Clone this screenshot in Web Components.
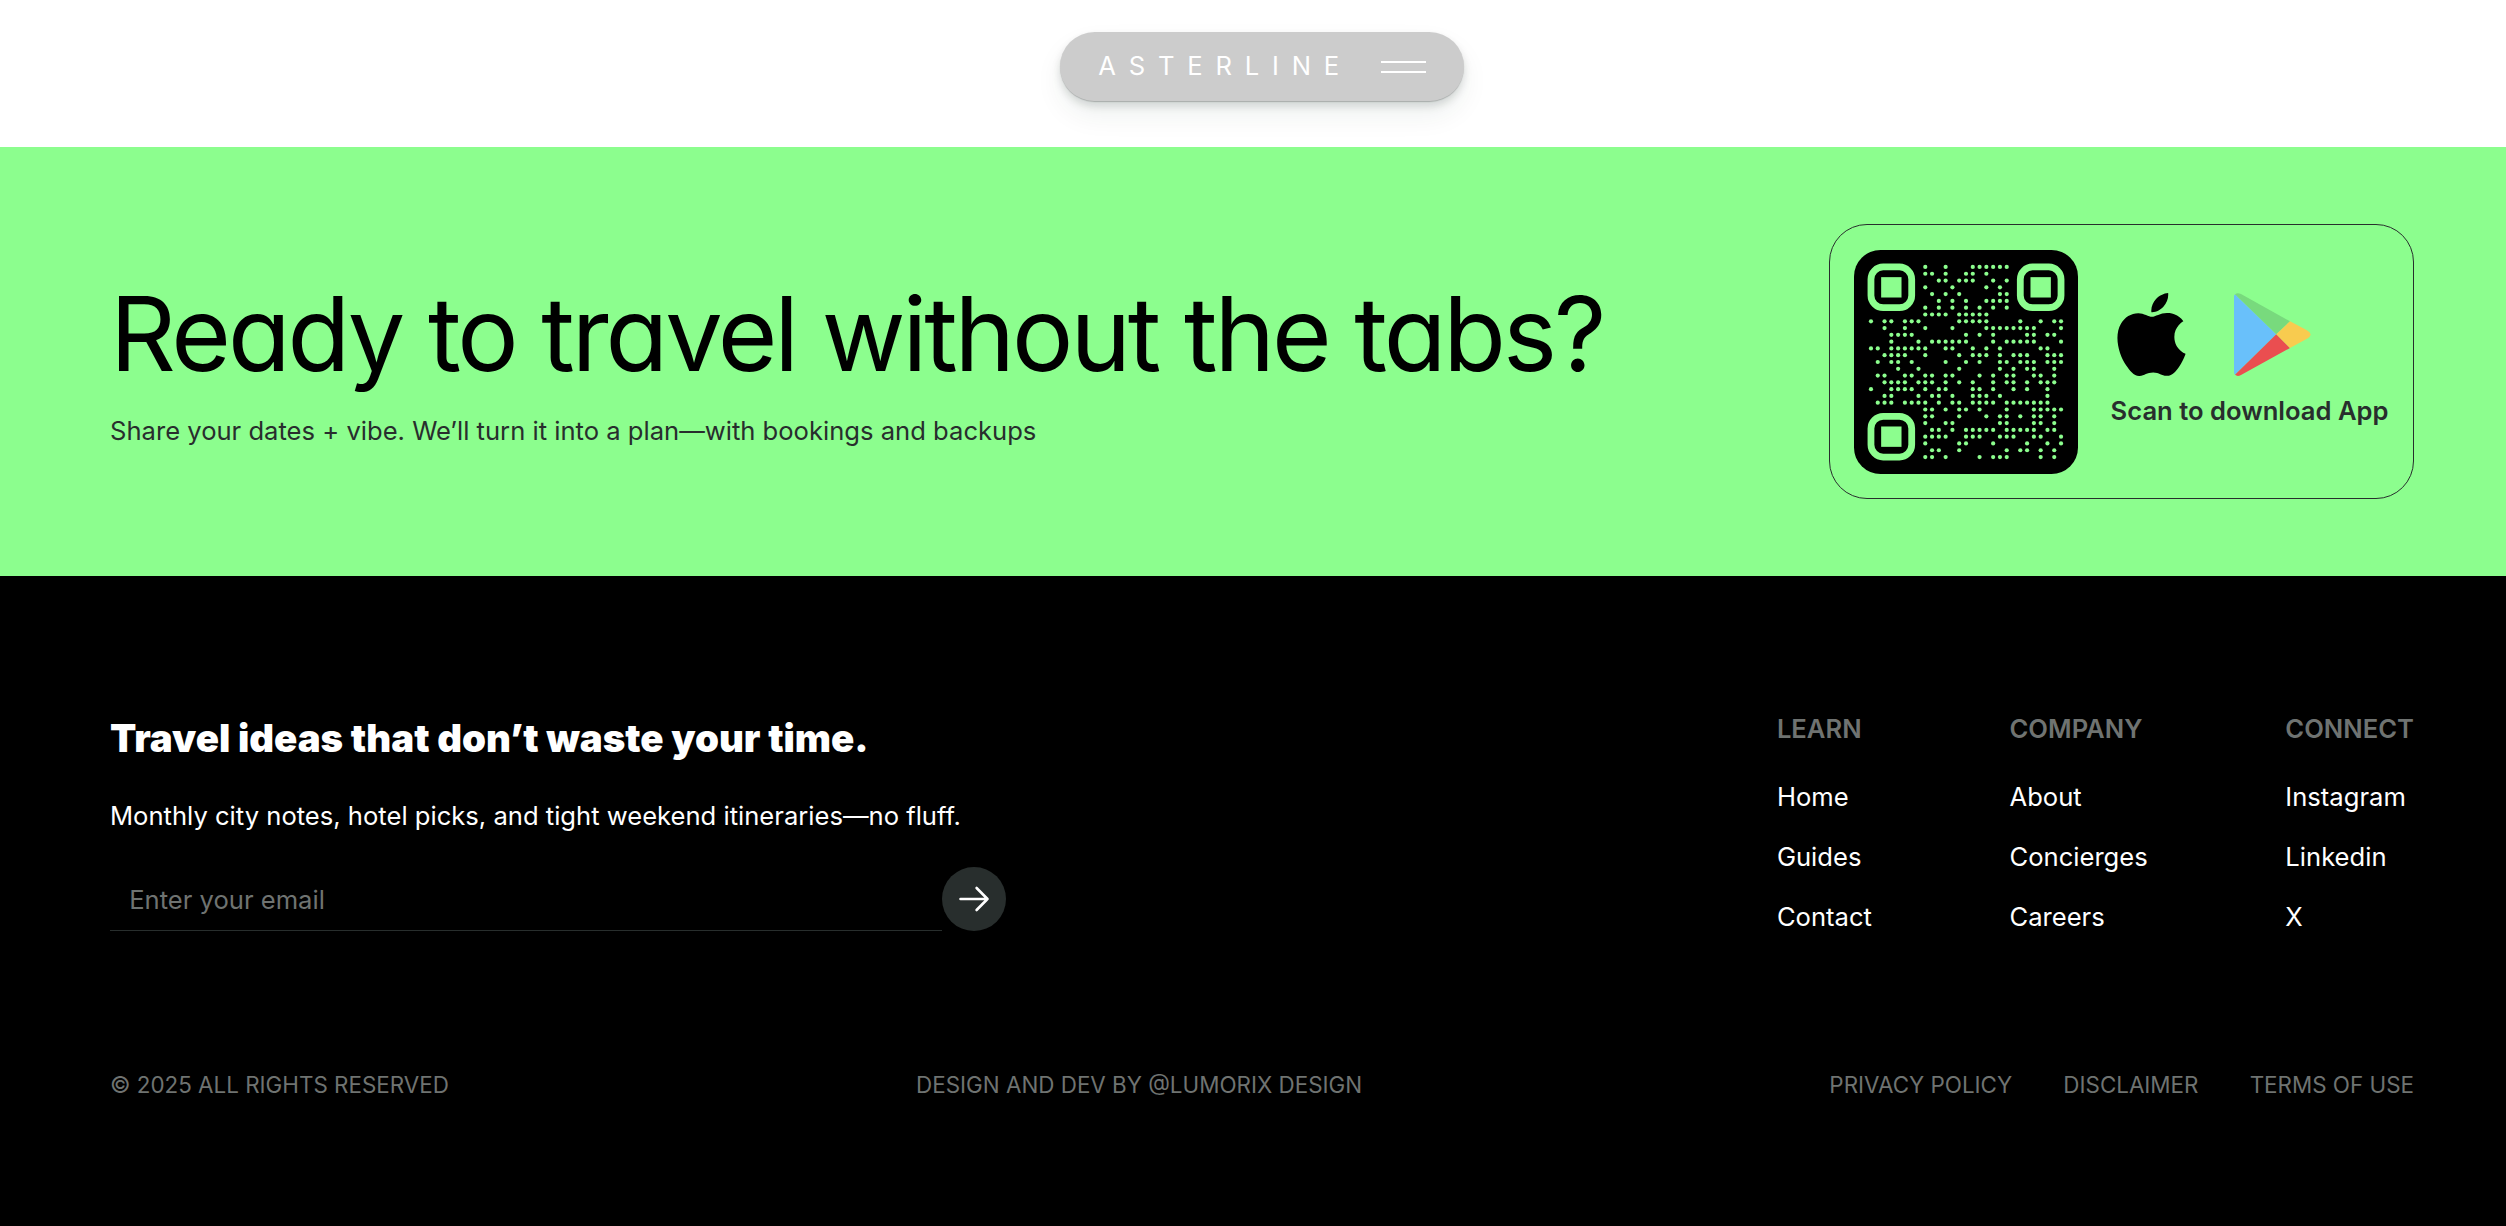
<!DOCTYPE html>
<html lang="en">
<head>
<meta charset="utf-8">
<title>Asterline</title>
<style>
  body {
    margin: 0;
    background: #000000;
    font-family: Inter, "Liberation Sans", sans-serif;
    font-size: 25.6px;
    line-height: 38.4px;
    --green: #8cfe8e;
    --ink: #282e2d;
    --muted: #6f7371;
    --line: #282e2d;
  }
</style>
</head>
<body>
<nav-pill>ASTERLINE</nav-pill>

<cta-band>
  <span slot="title">Ready to travel without the tabs?</span>
  <span slot="text">Share your dates + vibe. We’ll turn it into a plan—with bookings and backups</span>
  <app-download>Scan to download App</app-download>
</cta-band>

<site-footer>
  <email-signup slot="signup" placeholder="Enter your email">
    <span slot="title">Travel ideas that don’t waste your time.</span>
    <span slot="text">Monthly city notes, hotel picks, and tight weekend itineraries—no fluff.</span>
  </email-signup>
  <link-column slot="links" heading="LEARN">
    <a>Home</a><a>Guides</a><a>Contact</a>
  </link-column>
  <link-column slot="links" heading="COMPANY">
    <a>About</a><a>Concierges</a><a>Careers</a>
  </link-column>
  <link-column slot="links" heading="CONNECT">
    <a>Instagram</a><a>Linkedin</a><a>X</a>
  </link-column>
  <span slot="legal">© 2025 ALL RIGHTS RESERVED</span>
  <span slot="legal">DESIGN AND DEV BY @LUMORIX DESIGN</span>
  <legal-links slot="legal">
    <a>PRIVACY POLICY</a><a>DISCLAIMER</a><a>TERMS OF USE</a>
  </legal-links>
</site-footer>

<script>
const html = String.raw;

function attach(el, markup) {
  const template = document.createElement("template");
  template.innerHTML = markup;
  const root = el.attachShadow({ mode: "open" });
  root.appendChild(template.content.cloneNode(true));
  return root;
}

class NavPill extends HTMLElement {
  constructor() {
    super();
    attach(this, html`
      <style>
        :host {
          display: flex;
          justify-content: center;
          box-sizing: border-box;
          height: 147px;
          padding: 32px 0 0 18px;
          background: #ffffff;
        }
        .pill {
          display: flex;
          align-items: center;
          gap: 28.8px;
          box-sizing: border-box;
          height: 69px;
          padding: 0 38.4px;
          border-radius: 36px;
          background: rgba(0, 0, 0, 0.2);
          color: #ffffff;
          box-shadow:
            0 1px 1px rgba(0, 0, 0, 0.2),
            0 5px 9px rgba(10, 20, 17, 0.14),
            0 14px 28px rgba(20, 50, 40, 0.07);
        }
        .name {
          letter-spacing: 12.8px;
          padding-bottom: 1px;
        }
        .menu {
          display: flex;
          flex-direction: column;
          gap: 8px;
          width: 44.8px;
          padding-top: 1px;
        }
        .menu i {
          height: 2px;
          background: #ffffff;
        }
      </style>
      <div class="pill">
        <span class="name"><slot></slot></span>
        <div class="menu"><i></i><i></i></div>
      </div>
    `);
  }
}

class CtaBand extends HTMLElement {
  constructor() {
    super();
    attach(this, html`
      <style>
        :host {
          display: flex;
          align-items: center;
          justify-content: space-between;
          box-sizing: border-box;
          height: 429px;
          padding: 0 92px 0 110px;
          background: var(--green);
        }
        h2 {
          margin: 0 0 16px;
          font-size: 102.4px;
          font-weight: 400;
          line-height: 1.2;
          letter-spacing: -0.03em;
          font-feature-settings: "cv11";
          color: #000000;
        }
        p {
          margin: 0;
          color: var(--ink);
        }
      </style>
      <div>
        <h2><slot name="title"></slot></h2>
        <p><slot name="text"></slot></p>
      </div>
      <slot></slot>
    `);
  }
}

// lit modules of the code, one list of columns per row
const MODULES = [
  [8, 11, 15, 16, 17, 18, 19, 20],
  [8, 9, 11, 14, 15, 17],
  [10, 11, 13, 14, 15, 18, 20],
  [8, 12, 17, 19],
  [9, 11, 13, 19, 20],
  [10, 12, 14, 17, 18, 19, 20],
  [8, 10, 12, 14, 16, 18, 20],
  [8, 9, 10, 11, 13, 14, 15, 16, 17],
  [0, 2, 3, 5, 6, 7, 13, 14, 15, 16, 17, 22, 25, 27, 28],
  [2, 5, 8, 12, 17, 18, 19, 20, 21, 22, 23, 24, 28],
  [3, 4, 5, 6, 14, 16, 18, 23, 24, 26, 27],
  [3, 7, 9, 10, 11, 12, 13, 14, 18, 20, 21, 22, 23, 24, 28],
  [0, 1, 3, 4, 5, 6, 7, 8, 11, 12, 15, 17, 19, 25, 26],
  [2, 3, 4, 5, 8, 13, 15, 16, 17, 19, 21, 22, 23, 26, 27, 28],
  [1, 3, 4, 6, 11, 14, 16, 19, 20, 22, 23, 24, 26, 27, 28],
  [4, 7, 13, 19, 21, 23, 24, 27],
  [1, 2, 5, 6, 8, 9, 11, 12, 16, 18, 20, 21, 24, 25, 27],
  [2, 3, 4, 5, 7, 8, 9, 11, 13, 15, 18, 20, 21, 23, 25, 26, 27],
  [0, 3, 4, 5, 6, 8, 10, 11, 15, 16, 18, 21, 23, 26],
  [2, 3, 7, 9, 10, 12, 15, 16, 17, 19, 26],
  [1, 2, 3, 5, 6, 7, 8, 10, 12, 13, 15, 16, 17, 18, 20, 21, 22, 23, 24, 25, 26],
  [8, 9, 11, 13, 14, 16, 20, 24, 25, 26, 27, 28],
  [8, 9, 13, 17, 19, 20, 22, 24, 25, 27],
  [8, 11, 12, 19, 20, 24, 25, 27],
  [9, 10, 12, 14, 15, 16, 17, 18, 20, 21, 22, 23, 24, 26, 27],
  [8, 9, 10, 11, 14, 15, 16, 19, 20, 21, 24, 25, 28],
  [8, 13, 14, 18, 23, 26, 28],
  [9, 10, 13, 20, 22, 23, 25, 27],
  [8, 9, 11, 16, 18, 19, 20, 25, 27],
];

class QrCode extends HTMLElement {
  constructor() {
    super();
    const dots = MODULES.map((cols, y) =>
      cols.map((x) => `<circle cx="${x + 2.5}" cy="${y + 2.5}" r="0.31" />`).join("")
    ).join("");
    const finders = [[2, 2], [24, 2], [2, 24]].map(([x, y]) => `
      <rect x="${x + 0.5}" y="${y + 0.5}" width="6" height="6" rx="1.8"
        fill="none" stroke="var(--green)" />
      <rect x="${x + 2}" y="${y + 2}" width="3" height="3" />
    `).join("");
    attach(this, html`
      <style>
        :host {
          display: block;
          flex: none;
          width: 224px;
          height: 224px;
        }
        svg {
          display: block;
        }
      </style>
      <svg width="224" height="224" viewBox="0 0 33 33" fill="var(--green)">
        <rect width="33" height="33" rx="3.9" fill="#000000" />
        ${finders}${dots}
      </svg>
    `);
  }
}

class AppDownload extends HTMLElement {
  constructor() {
    super();
    attach(this, html`
      <style>
        :host {
          display: flex;
          align-items: center;
          gap: 32.6px;
          box-sizing: border-box;
          width: 585px;
          height: 275px;
          padding: 0 0 0 24px;
          border: 1px solid var(--ink);
          border-radius: 38px;
          color: var(--ink);
          font-weight: 600;
          white-space: nowrap;
        }
        .stores {
          display: flex;
          gap: 48px;
          margin-bottom: 16px;
          padding-left: 6px;
        }
        svg {
          display: block;
        }
      </style>
      <qr-code></qr-code>
      <div>
        <div class="stores">
          <svg width="69" height="83" viewBox="2.1 0 19.8 24" preserveAspectRatio="none">
            <path d="M12.152 6.896c-.948 0-2.415-1.078-3.96-1.04-2.04.027-3.91 1.183-4.961 3.014-2.117 3.675-.546 9.103 1.519 12.09 1.013 1.454 2.208 3.09 3.792 3.039 1.52-.065 2.09-.987 3.935-.987 1.831 0 2.35.987 3.96.948 1.637-.026 2.676-1.48 3.676-2.948 1.156-1.688 1.636-3.325 1.662-3.415-.039-.013-3.182-1.221-3.22-4.857-.026-3.04 2.48-4.494 2.597-4.559-1.429-2.09-3.623-2.324-4.39-2.376-2-.156-3.675 1.09-4.61 1.09zM15.53 3.83c.843-1.012 1.4-2.427 1.245-3.83-1.207.052-2.662.805-3.532 1.818-.78.896-1.454 2.338-1.273 3.714 1.338.104 2.715-.688 3.559-1.701" />
          </svg>
          <svg width="77" height="83" viewBox="0 0 77 83">
            <path d="M1 1.2 L42.3 41.2 L1 81.8 Q0 81 0 79 V4 Q0 2 1 1.2Z" fill="#69c0fa" />
            <path d="M1 1.2 Q3.5 -0.8 7 1 L56 28.3 L42.3 41.2Z" fill="#78da7d" />
            <path d="M42.3 41.2 L56 55 L7 82 Q3.5 84 1 81.8Z" fill="#ea4e50" />
            <path d="M56 28.3 L72.5 37 Q80.5 41.5 72.5 46 L56 55 L42.3 41.2Z" fill="#f8cb4f" />
          </svg>
        </div>
        <slot></slot>
      </div>
    `);
  }
}

class EmailSignup extends HTMLElement {
  constructor() {
    super();
    const root = attach(this, html`
      <style>
        :host {
          display: block;
          width: 896px;
        }
        h3 {
          margin: 0 0 29.2px;
          font-size: 38.4px;
          font-weight: 900;
          line-height: 57.6px;
          color: #ffffff;
        }
        p {
          margin: 0 0 31px;
          color: #ffffff;
        }
        form {
          display: flex;
        }
        .field {
          display: flex;
          align-items: center;
          flex: 1;
          box-sizing: border-box;
          height: 64px;
          padding: 4px 19.2px 0;
          border-bottom: 1px solid var(--line);
          color: var(--muted);
        }
        button {
          display: flex;
          align-items: center;
          justify-content: center;
          width: 64px;
          height: 64px;
          padding: 0;
          border: 0;
          border-radius: 50%;
          background: var(--line);
        }
      </style>
      <h3><slot name="title"></slot></h3>
      <p><slot name="text"></slot></p>
      <form>
        <span class="field"></span>
        <button type="button" aria-label="Subscribe">
          <svg width="32" height="28" viewBox="0 0 32 28" fill="none"
            stroke="#ffffff" stroke-width="2.6" stroke-linecap="round" stroke-linejoin="round">
            <path d="M2.5 14 H29.5 M18.6 3 L29.5 14 L18.6 25" />
          </svg>
        </button>
      </form>
    `);
    root.querySelector(".field").textContent = this.getAttribute("placeholder");
  }
}

class LinkColumn extends HTMLElement {
  constructor() {
    super();
    const root = attach(this, html`
      <style>
        :host {
          display: flex;
          flex-direction: column;
          gap: 21.8px;
          color: #ffffff;
        }
        h4 {
          margin: 0 0 7.4px;
          font-size: inherit;
          font-weight: 600;
          color: var(--muted);
        }
      </style>
      <h4></h4>
      <slot></slot>
    `);
    root.querySelector("h4").textContent = this.getAttribute("heading");
  }
}

class LegalLinks extends HTMLElement {
  constructor() {
    super();
    attach(this, html`
      <style>
        :host {
          display: flex;
          gap: 51.2px;
        }
      </style>
      <slot></slot>
    `);
  }
}

class SiteFooter extends HTMLElement {
  constructor() {
    super();
    attach(this, html`
      <style>
        :host {
          display: block;
          box-sizing: border-box;
          height: 650px;
          padding: 134.4px 92px 0 110px;
          background: #000000;
        }
        .top,
        .bottom {
          display: flex;
          justify-content: space-between;
        }
        .columns {
          display: flex;
          gap: 137.6px;
        }
        .bottom {
          margin-top: 131px;
          font-size: 22.4px;
          line-height: 33.6px;
          color: var(--muted);
        }
      </style>
      <div class="top">
        <slot name="signup"></slot>
        <div class="columns"><slot name="links"></slot></div>
      </div>
      <div class="bottom"><slot name="legal"></slot></div>
    `);
  }
}

customElements.define("nav-pill", NavPill);
customElements.define("cta-band", CtaBand);
customElements.define("qr-code", QrCode);
customElements.define("app-download", AppDownload);
customElements.define("email-signup", EmailSignup);
customElements.define("link-column", LinkColumn);
customElements.define("legal-links", LegalLinks);
customElements.define("site-footer", SiteFooter);
</script>
</body>
</html>
